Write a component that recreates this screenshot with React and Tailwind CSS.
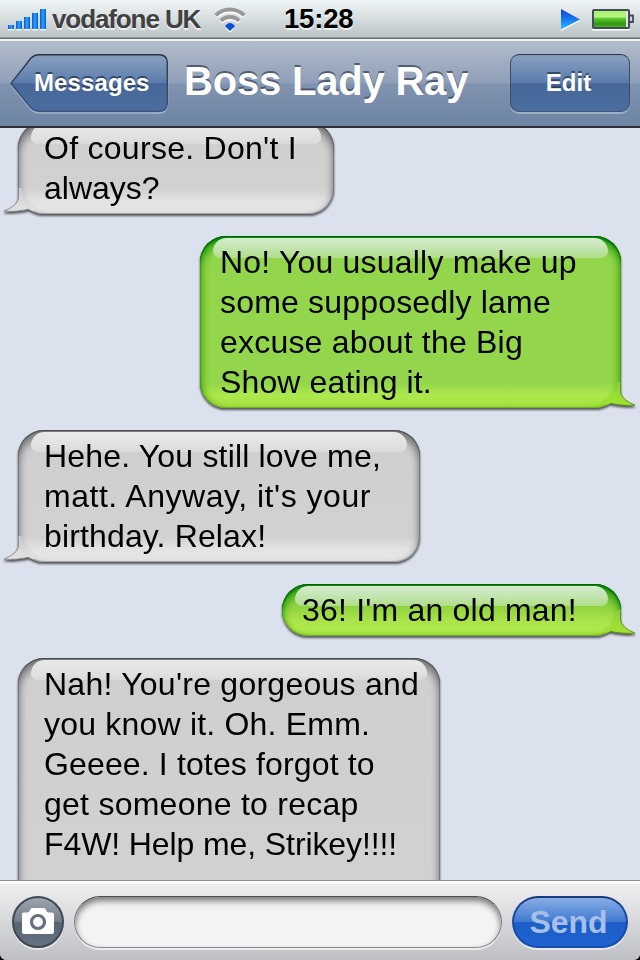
import React from "react";

const messages = [
  {
    from: "them",
    width: "w-[316px]",
    lines: [
      ["Of course. Don't I", "tracking-[0.28px]"],
      ["always?", "tracking-[0px]"],
    ],
  },
  {
    from: "me",
    width: "w-[421px]",
    lines: [
      ["No! You usually make up", "tracking-[0.2px]"],
      ["some supposedly lame", "tracking-[0.18px]"],
      ["excuse about the Big", "tracking-[0.2px]"],
      ["Show eating it.", "tracking-[0.13px]"],
    ],
  },
  {
    from: "them",
    width: "w-[402px]",
    lines: [
      ["Hehe. You still love me,", "tracking-[0.18px]"],
      ["matt. Anyway, it's your", "tracking-[0.52px]"],
      ["birthday. Relax!", "tracking-[0.14px]"],
    ],
  },
  { from: "me", width: "w-[339px]", lines: [["36! I'm an old man!", "tracking-[0.2px]"]] },
  {
    from: "them",
    width: "w-[422px]",
    lines: [
      ["Nah! You're gorgeous and", "tracking-[0.25px]"],
      ["you know it. Oh. Emm.", "tracking-[0.2px]"],
      ["Geeee. I totes forgot to", "tracking-[0.14px]"],
      ["get someone to recap", "tracking-[0.25px]"],
      ["F4W! Help me, Strikey!!!!", "tracking-[-0.1px]"],
      ["\u00a0", "tracking-[0px]"],
    ],
  },
];

function Tail({ mine, id }) {
  return (
    <svg
      className={mine ? "absolute -right-[16px] bottom-0 -scale-x-100" : "absolute -left-[16px] bottom-0"}
      width="44"
      height="30"
      viewBox="0 0 44 30"
    >
      <defs>
        <linearGradient id={`${id}-fill`} x1="0" y1="3" x2="0" y2="28" gradientUnits="userSpaceOnUse">
          <stop offset="0" stopColor={mine ? "#85cf36" : "#c8c8c8"} />
          <stop offset="0.5" stopColor={mine ? "#98dc38" : "#d8d8d8"} />
          <stop offset="1" stopColor={mine ? "#a2e22c" : "#e3e3e3"} />
        </linearGradient>
        <radialGradient id={`${id}-fade`} cx="42" cy="4" r="50" gradientUnits="userSpaceOnUse">
          <stop offset="0.36" stopColor="#000" />
          <stop offset="0.48" stopColor="#fff" />
        </radialGradient>
        <mask id={`${id}-mask`} maskUnits="userSpaceOnUse" x="0" y="0" width="44" height="30">
          <rect width="44" height="30" fill={`url(#${id}-fade)`} />
        </mask>
      </defs>
      <path
        d="M16.5 4 V13 C16.5 19 10 24 2 27 C9 28 19 27 27 25.2 L31 27 L36 20 L24 4 Z"
        fill={`url(#${id}-fill)`}
        mask={`url(#${id}-mask)`}
      />
      <path
        d="M16.5 5 V13 C16.5 19 10 24 2 27 C9 28 19 27 27 25.2"
        fill="none"
        stroke={mine ? "#57911c" : "#85878b"}
        strokeWidth="0.9"
      />
    </svg>
  );
}

function Bubble({ from, width, lines, id }) {
  const mine = from === "me";
  const short = lines.length === 1;
  const tone = mine
    ? short
      ? "bg-[linear-gradient(to_bottom,#7cc93e_0,#8ed33f_22px,#a9e249_36px,#aee84c_44px,#a9e441_100%)] shadow-[inset_0_1px_0_#075f08,inset_0_3px_1px_#0b8b0d,inset_0_8px_9px_rgba(0,130,0,0.65),inset_0_-1px_0_#7caa35,inset_1px_0_4px_rgba(100,185,20,0.6),inset_-1px_0_4px_rgba(100,185,20,0.6)]"
      : "bg-[linear-gradient(to_bottom,#93d64c_0,#93d64c_calc(100%-25px),#ade84d_calc(100%-13px),#a9e441_100%)] shadow-[inset_0_1px_0_#075f08,inset_0_3px_1px_#0b8b0d,inset_0_8px_9px_rgba(0,130,0,0.65),inset_0_-1px_0_#7caa35,inset_1px_0_0_#6aa834,inset_-1px_0_0_#6aa834,inset_5px_0_8px_-3px_#70c414,inset_-5px_0_8px_-3px_#70c414]"
    : "bg-[linear-gradient(to_bottom,#cfcfcf_0,#d1d1d1_calc(100%-25px),#e3e3e3_calc(100%-13px),#e5e5e5_100%)] shadow-[inset_0_1px_0_#4d4d50,inset_0_2px_1px_#77787a,inset_0_8px_9px_rgba(0,0,0,0.38),inset_0_-1px_0_#a5a5a5,inset_1px_0_0_#8f9195,inset_-1px_0_0_#8f9195,inset_5px_0_7px_-3px_rgba(0,0,0,0.16),inset_-5px_0_7px_-3px_rgba(0,0,0,0.16)]";
  return (
    <div
      className={`relative shrink-0 [filter:drop-shadow(0_2px_1px_rgba(0,0,0,0.62))] ${width} ${
        mine ? "mr-[19px] self-end" : "ml-[18px] self-start"
      }`}
    >
      <div className={`rounded-[26px] ${tone} pt-[6px] pb-[6px] ${mine ? "pl-[20px]" : "pl-[26px]"}`}>
        <div
          className={`absolute top-[2px] right-[13px] left-[13px] h-[20px] rounded-t-[14px] rounded-b-[7px] ${
            mine
              ? "bg-[linear-gradient(to_bottom,#d6edd0,#bfe3a9_60%,#b0de87)]"
              : "bg-[linear-gradient(to_bottom,#e9e9e9,#e2e2e2_60%,#dadada)]"
          }`}
        />
        <Tail mine={mine} id={id} />
        {lines.map(([text, tracking]) => (
          <p key={text} className={`relative h-[40px] text-[32px] leading-[40px] whitespace-nowrap text-black ${tracking}`}>
            {text}
          </p>
        ))}
      </div>
    </div>
  );
}

function StatusBar() {
  return (
    <div className="flex h-[41px] shrink-0 items-start border-b-2 border-b-[#f1f1ec] bg-[linear-gradient(to_bottom,#eef5f7_0,#e6ecee_8px,#bbc3c5_37px,#687274_38px,#687274_39px)] font-bold">
      <svg className="mt-[9px] ml-[8px] shrink-0" width="39" height="22" viewBox="0 0 39 22">
        <defs>
          <linearGradient id="signal" x1="0" y1="0" x2="1" y2="0">
            <stop offset="0" stopColor="#0759d5" />
            <stop offset="0.5" stopColor="#2ea2fa" />
            <stop offset="1" stopColor="#0759d5" />
          </linearGradient>
        </defs>
        <path d="M0 20.5h6M8 20.5h6M16 20.5h6M24 20.5h6M32 20.5h6" stroke="#fff" strokeWidth="1.6" />
        <rect x="0" y="16" width="6" height="4" fill="url(#signal)" />
        <rect x="8" y="12" width="6" height="8" fill="url(#signal)" />
        <rect x="16" y="8" width="6" height="12" fill="url(#signal)" />
        <rect x="24" y="4" width="6" height="16" fill="url(#signal)" />
        <rect x="32" y="0" width="6" height="20" fill="url(#signal)" />
      </svg>
      <div className="ml-[5px] w-[162px] text-[26px] leading-[38px] tracking-[-1.1px] whitespace-nowrap text-[#414141] [text-shadow:0_2px_0_rgba(255,255,255,0.7)]">
        vodafone UK
      </div>
      <svg className="mt-[7px] shrink-0" width="34" height="27" viewBox="0 0 34 27">
        <g fill="none" stroke="#fff" strokeWidth="4.500" transform="translate(0 1.5)">
          <path d="M2 8.200 A20 20 0 0 1 30 8.200" />
          <path d="M7 13.600 A12.500 12.500 0 0 1 25 13.600" />
        </g>
        <path d="M16 25.800 L11 20.500 H21Z" fill="#fff" />
        <g fill="none" stroke="#999" strokeWidth="4">
          <path d="M1.700 8.400 A20 20 0 0 1 30.300 8.400" />
          <path d="M7 13.800 A12.500 12.500 0 0 1 25 13.800" />
        </g>
        <path d="M16 24 L11.200 19.500 Q12.500 16 16 16 Q19.500 16 20.800 19.500Z" fill="#0b4fd8" />
      </svg>
      <div className="ml-[36px] w-[266px] text-[27.500px] leading-[38px] tracking-[-0.2px] text-black [text-shadow:0_2px_0_rgba(255,255,255,0.7)]">
        15:28
      </div>
      <svg className="mt-[8px] ml-[6px] shrink-0" width="80" height="24" viewBox="0 0 80 24">
        <defs>
          <linearGradient id="play" x1="0" y1="0" x2="0" y2="1">
            <stop offset="0" stopColor="#0a3fd2" />
            <stop offset="0.450" stopColor="#1573ec" />
            <stop offset="1" stopColor="#30c0ff" />
          </linearGradient>
          <linearGradient id="charge" x1="0" y1="0" x2="0" y2="1">
            <stop offset="0" stopColor="#a9f26e" />
            <stop offset="0.350" stopColor="#b5f683" />
            <stop offset="0.480" stopColor="#5fc82e" />
            <stop offset="0.800" stopColor="#2f9410" />
            <stop offset="1" stopColor="#4db11d" />
          </linearGradient>
        </defs>
        <path d="M5 3 V23 L24 13Z" fill="#fff" />
        <path d="M5 1 V21.500 L24 11.500Z" fill="url(#play)" />
        <path d="M36 21.800 H74" stroke="#fff" strokeWidth="1.600" />
        <rect x="37" y="2" width="36" height="18" rx="1" fill="#e2e5ea" stroke="#454b5e" strokeWidth="2" />
        <rect x="38" y="3" width="32" height="16" fill="url(#charge)" />
        <path d="M74 7.500 H77 V14 H74" fill="#d0d4da" stroke="#454b5e" strokeWidth="1.800" />
      </svg>
    </div>
  );
}

function NavBar() {
  return (
    <div className="flex h-[87px] shrink-0 items-start border-b-2 border-[#2c3034] bg-[linear-gradient(to_bottom,#b2bdcc_0,#8f9fb7_42px,#8093b0_43px,#6d84a4_100%)] pt-[13px] font-bold text-white">
      <div className="relative ml-[10px] h-[60px] w-[160px]">
        <svg className="absolute inset-0" width="160" height="60" viewBox="0 0 160 60">
          <defs>
            <linearGradient id="back" x1="0" y1="0" x2="0" y2="1">
              <stop offset="0" stopColor="#8197b7" />
              <stop offset="0.070" stopColor="#859dbf" />
              <stop offset="0.500" stopColor="#597bab" />
              <stop offset="0.510" stopColor="#476899" />
              <stop offset="1" stopColor="#4a6d9f" />
            </linearGradient>
            <linearGradient id="backEdge" x1="0" y1="0" x2="0" y2="1">
              <stop offset="0" stopColor="#2b3542" />
              <stop offset="1" stopColor="#3b557d" />
            </linearGradient>
          </defs>
          <path
            d="M1 31 L21 5.500 Q24.500 2 29 2 H149 Q157.500 2 157.500 11 V50 Q157.500 59 149 59 H29 Q24.500 59 21 55.500Z"
            fill="none"
            stroke="#a4b2c7"
            strokeWidth="1.500"
          />
          <path
            d="M1 29.500 L21 4 Q24.500 0.700 29 0.700 H149 Q157.300 0.700 157.300 9 V49 Q157.300 57.300 149 57.300 H29 Q24.500 57.300 21 54Z"
            fill="url(#back)"
            stroke="url(#backEdge)"
            strokeWidth="1.400"
          />
        </svg>
        <div className="relative pl-[24px] text-[24px] leading-[58px] tracking-[0.1px] [text-shadow:0_-2px_0_rgba(30,45,70,0.7)]">
          Messages
        </div>
      </div>
      <div className="ml-[14px] w-[326px] text-[40px] leading-[54px] tracking-[-0.2px] whitespace-nowrap [text-shadow:0_-2px_0_rgba(50,60,80,0.7)]">
        Boss Lady Ray
      </div>
      <div className="h-[58px] w-[120px] rounded-[9px] border-[1.500px] border-t-[#2b3542] border-r-[#3b4c69] border-b-[#3b557d] border-l-[#3b4c69] bg-[linear-gradient(to_bottom,#8197b7_0,#859dbf_4px,#597bab_50%,#476899_51%,#4a6d9f_100%)] bg-origin-border pr-[3px] text-center text-[24px] leading-[56px] shadow-[0_2px_0_#9eadc3] [text-shadow:0_-2px_0_rgba(30,45,70,0.7)]">
        Edit
      </div>
    </div>
  );
}

function ComposeBar() {
  return (
    <div className="relative flex h-[80px] shrink-0 items-start border-t border-[#8d8e92] bg-[linear-gradient(to_bottom,#fff_0,#fff_2px,#efeff0_3px,#bfc0c5_100%)] pt-[15px] pl-[12px]">
      <div className="flex size-[52px] items-center justify-center rounded-full border-2 border-[#3f4854] bg-[linear-gradient(to_bottom,#a0a7b1_0,#737d8a_50%,#596471_51%,#667383_100%)] bg-origin-border shadow-[0_2px_0_#e6e7e9]">
        <svg width="34" height="28" viewBox="0 0 34 28" className="mb-[3px]">
          <path
            d="M3 5.500 H6.500 Q8.500 5 9 3 Q9.500 1 11.500 1 H22.500 Q24.500 1 25 3 Q25.500 5 27.500 5.500 H31 Q33 5.500 33 7.500 V25 Q33 27 31 27 H3 Q1 27 1 25 V7.500 Q1 5.500 3 5.500Z"
            fill="#fff"
          />
          <circle cx="17" cy="15" r="6.500" fill="#fff" stroke="#667080" strokeWidth="3.200" />
        </svg>
      </div>
      <div className="ml-[10px] h-[52px] w-[428px] rounded-full border-[1.500px] border-t-[#4f4f51] border-r-[#77787a] border-b-[#8b8c8f] border-l-[#77787a] bg-[#f3f3f3] shadow-[0_2px_0_#ececee,inset_0_4px_6px_rgba(0,0,0,0.5)]" />
      <div className="ml-[10px] h-[52px] w-[116px] rounded-full border-2 border-t-[#173b7c] border-r-[#174ba4] border-b-[#164db0] border-l-[#174ba4] bg-[linear-gradient(to_bottom,#8eb1e6_0,#4079d2_50%,#1c5ec8_51%,#1f63cf_100%)] bg-origin-border pr-[3px] text-center text-[32px] leading-[48px] font-bold text-[#a5bfe9] shadow-[0_2px_0_#e6e7e9]">
        Send
      </div>
      <svg className="absolute bottom-0 left-0" width="640" height="5" viewBox="0 0 640 5">
        <path d="M0 0 Q1 4 5 5 H0Z M640 0 Q639 4 635 5 H640Z" fill="#000" />
      </svg>
    </div>
  );
}

export default function App() {
  return (
    <div className="flex h-[960px] w-[640px] flex-col overflow-hidden bg-[#dbe1ed] font-['Liberation_Sans',Arial,sans-serif]">
      <StatusBar />
      <NavBar />
      <div className="min-h-0 flex-1 overflow-hidden">
        <div className="-mt-[6px] flex flex-col gap-[22px]">
          {messages.map((m, i) => (
            <Bubble key={m.lines[0][0]} id={`bubble-${i}`} {...m} />
          ))}
        </div>
      </div>
      <ComposeBar />
    </div>
  );
}
